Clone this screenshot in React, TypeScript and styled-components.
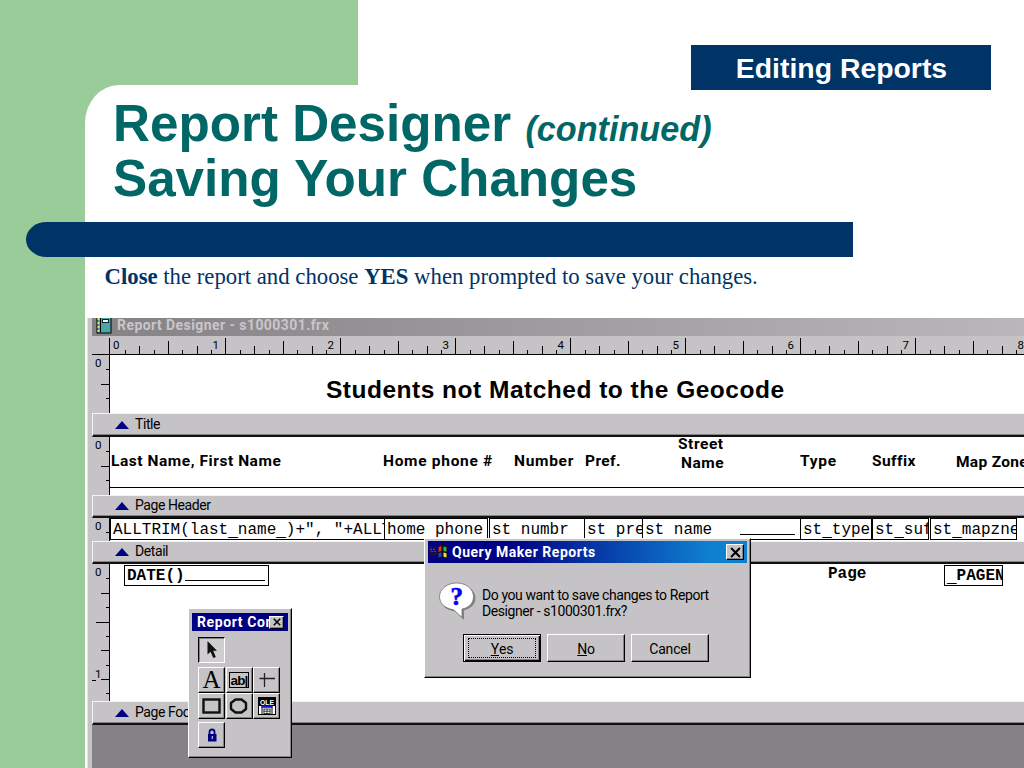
import type { ReactNode } from "react";
import styled, { createGlobalStyle, css } from "styled-components";

const colors = {
  green: "#99cc99",
  teal: "#006666",
  navy: "#003366",
  face: "#c6c3c6",
  shadow: "#848284",
  titleBlue: "#000084",
};

const sans = `"Liberation Sans", Arial, sans-serif`;
const ui = `Roboto, "Liberation Sans", sans-serif`;
const serif = `"Liberation Serif", "Times New Roman", serif`;
const mono = `"Liberation Mono", "Courier New", monospace`;

const GlobalStyle = createGlobalStyle`
  * {
    box-sizing: border-box;
  }
  body {
    margin: 0;
    overflow: hidden;
    background: white;
  }
`;

const raised = css`
  border: 1px solid;
  border-color: white #000 #000 white;
  box-shadow: inset -1px -1px 0 ${colors.shadow};
`;

/* ---------- slide ---------- */

const Slide = styled.main`
  width: 1024px;
  height: 768px;
  display: flex;
  flex-direction: column;
  background: ${colors.green};
  overflow: hidden;
  font-family: ${sans};
`;

const SlideTop = styled.header`
  position: relative;
  z-index: 1;
  flex: none;
  height: 85px;
  margin-left: 358px;
  padding: 45px 33px 0 0;
  display: flex;
  justify-content: flex-end;
  background: white;
`;

const Badge = styled.div`
  flex: none;
  width: 300px;
  height: 45px;
  padding-left: 1px;
  background: ${colors.navy};
  color: white;
  font-size: 28.4px;
  font-weight: bold;
  line-height: 47px;
  text-align: center;
`;

const SlideBody = styled.section`
  flex: 1;
  min-height: 0;
  margin-left: 85px;
  display: flex;
  flex-direction: column;
  background: white;
  border-top-left-radius: 34px 38px;
`;

const Heading = styled.h1`
  flex: none;
  height: 137px;
  margin: 0;
  padding: 11px 0 0 28px;
  color: ${colors.teal};
  font-size: 51.2px;
  line-height: 55px;
  white-space: nowrap;

  & em {
    font-size: 34.2px;
    line-height: 1;
  }
`;

const Bar = styled.div`
  flex: none;
  width: 827px;
  height: 35px;
  margin: 0 0 1px -59px;
  background: ${colors.navy};
  border-radius: 21px 0 0 21px / 18px 0 0 18px;
`;

const Instruction = styled.p`
  flex: none;
  height: 60px;
  margin: 0;
  padding: 6px 0 0 19.5px;
  color: ${colors.navy};
  font-family: ${serif};
  font-size: 22.76px;
  line-height: 26px;
  white-space: nowrap;
`;

/* ---------- designer window ---------- */

const Designer = styled.div`
  position: relative;
  flex: 1;
  min-height: 0;
  margin-left: 2px;
  padding-left: 4px;
  border-left: 1px solid #e4e2e4;
  display: flex;
  flex-direction: column;
  overflow: hidden;
  background: ${colors.face};
  font-family: ${ui};
`;

const DesignerTitle = styled.div`
  flex: none;
  height: 18px;
  padding-left: 4px;
  display: flex;
  gap: 5px;
  background: linear-gradient(90deg, #848284, #bab7ba);
  color: #c9c6c9;
  font-size: 14px;
  font-weight: bold;
  line-height: 15px;
  letter-spacing: 0.43px;
`;

const TopRuler = styled.svg`
  flex: none;
  display: block;
  width: 932px;
  height: 19px;
`;

const Section = styled.div<{ $height: number }>`
  flex: none;
  height: ${(p) => p.$height}px;
  display: flex;
`;

const SideRuler = styled.svg`
  flex: none;
  display: block;
  width: 18px;
  height: 100%;
`;

const Canvas = styled.div`
  position: relative;
  flex: 1;
  overflow: hidden;
  background: white;
`;

const BandBar = styled.div<{ $height: number }>`
  flex: none;
  height: ${(p) => p.$height}px;
  padding: 0 0 2px 22px;
  display: flex;
  align-items: center;
  gap: 6px;
  background: ${colors.face};
  border-top: 1px solid #f4f3f4;
  border-left: 1px solid #f4f3f4;
  border-bottom: 2px solid #111;
  box-shadow: inset 0 -1px 0 ${colors.shadow};
  font-size: 14px;
  line-height: 18px;
  letter-spacing: -0.42px;
`;

const Triangle = styled.span`
  margin-top: 2px;
  border: solid transparent;
  border-width: 0 7px 8px;
  border-bottom-color: ${colors.titleBlue};
`;

const Desk = styled.div`
  flex: 1;
  background: ${colors.shadow};
`;

/* report objects sit wherever the designer dropped them */
const ReportLabel = styled.span<{
  $x: number;
  $y: number;
  $size?: number;
  $track?: number;
  $font?: string;
}>`
  position: absolute;
  left: ${(p) => p.$x}px;
  top: ${(p) => p.$y}px;
  font-family: ${(p) => p.$font ?? ui};
  font-size: ${(p) => p.$size ?? 15.5}px;
  font-weight: bold;
  line-height: 18px;
  letter-spacing: ${(p) => p.$track ?? 0.55}px;
  white-space: nowrap;
`;

const Field = styled.span<{ $x: number; $width: number; $bold?: boolean }>`
  position: absolute;
  left: ${(p) => p.$x}px;
  top: ${(p) => (p.$bold ? 1 : 0)}px;
  width: ${(p) => p.$width}px;
  height: ${(p) => (p.$bold ? 21 : 22)}px;
  padding-left: 2px;
  border: 1px solid #000;
  overflow: hidden;
  font-family: ${mono};
  font-size: 16px;
  font-weight: ${(p) => (p.$bold ? "bold" : "normal")};
  line-height: ${(p) => (p.$bold ? 20 : 22)}px;
  white-space: pre;
`;

const Underscore = styled.span`
  position: relative;
  top: 2px;
  font-weight: bold;
`;

const FieldLine = styled.span<{ $x: number; $y: number; $width: number }>`
  position: absolute;
  left: ${(p) => p.$x}px;
  top: ${(p) => p.$y}px;
  width: ${(p) => p.$width}px;
  height: 1px;
  background: #000;
`;

/* ---------- dialog ---------- */

const Dialog = styled.div`
  position: absolute;
  left: 336px;
  top: 220px;
  width: 327px;
  height: 140px;
  padding: 2px 3px;
  background: ${colors.face};
  ${raised}
`;

const DialogTitle = styled.div`
  height: 22px;
  padding: 0 3px 0 0;
  display: flex;
  align-items: center;
  background: linear-gradient(90deg, #000084 25%, #0f7fd0 88%);
  color: white;
  font-size: 14px;
  font-weight: bold;
  letter-spacing: 0.52px;

  & > span {
    flex: 1;
    margin-left: 3px;
  }
`;

const CloseButton = styled.button<{ $size: number }>`
  flex: none;
  width: ${(p) => p.$size + 2}px;
  height: ${(p) => p.$size}px;
  padding: 0;
  display: flex;
  align-items: center;
  justify-content: center;
  background: ${colors.face};
  ${raised}
`;

const Message = styled.div`
  height: 71px;
  padding: 18px 0 0 10px;
  display: flex;
  gap: 4px;
  font-size: 14px;
  line-height: 15.5px;
  letter-spacing: -0.42px;
  white-space: nowrap;

  & > p {
    margin: 7px 0 0;
  }
`;

const Actions = styled.div`
  padding-left: 35px;
  display: flex;
  gap: 6px;
`;

const Button = styled.button<{ $focused?: boolean }>`
  width: 78px;
  height: 28px;
  padding: 2px;
  background: ${colors.face};
  color: #000;
  font-family: ${ui};
  font-size: 14px;
  letter-spacing: -0.2px;
  ${raised}
  ${(p) =>
    p.$focused &&
    css`
      border-color: #000;
      box-shadow:
        inset 1px 1px 0 white,
        inset -1px -1px 0 #000,
        inset -2px -2px 0 ${colors.shadow};
    `}

  & > span {
    height: 20px;
    margin: 1px 2px;
    padding-top: 2px;
    display: flex;
    align-items: center;
    justify-content: center;
    border: 1px dotted ${(p) => (p.$focused ? "#000" : "transparent")};
  }
`;

/* ---------- controls palette ---------- */

const Palette = styled.div`
  position: absolute;
  left: 100px;
  top: 290px;
  width: 104px;
  height: 150px;
  padding: 4px 3px;
  background: ${colors.face};
  ${raised}
`;

const PaletteTitle = styled.div`
  height: 18px;
  padding: 0 4px 0 5px;
  display: flex;
  align-items: center;
  background: ${colors.titleBlue};
  color: white;
  font-size: 14px;
  font-weight: bold;
  letter-spacing: 0.6px;
  white-space: nowrap;

  & > span {
    flex: 1;
    min-width: 0;
    overflow: hidden;
  }
`;

const Tools = styled.div`
  padding: 6px 0 0 6px;
  display: grid;
  grid-template-columns: repeat(3, 27.5px);
  grid-template-rows: 26px 26px 26px 26px;

  & > :nth-child(1) {
    grid-column: 1 / -1;
  }
  & > :nth-child(n + 2) {
    transform: translateY(4px);
  }
  & > :nth-child(8) {
    transform: translateY(7px);
  }
`;

const Tool = styled.button<{ $pressed?: boolean }>`
  width: 27px;
  height: 26px;
  padding: 0;
  display: flex;
  align-items: center;
  justify-content: center;
  background: ${colors.face};
  color: #000;
  ${raised}
  ${(p) =>
    p.$pressed &&
    css`
      border-color: #000 white white #000;
      background: #cfcdcf;
      box-shadow: inset 1px 1px 0 ${colors.shadow};
    `}
`;

const ToolLetter = styled.span`
  font-family: ${serif};
  font-size: 25px;
  line-height: 24px;
`;

const TextBoxGlyph = styled.span`
  width: 20px;
  height: 16px;
  border: 1px solid #000;
  font-family: ${sans};
  font-size: 13.5px;
  font-weight: bold;
  line-height: 15px;
  letter-spacing: -0.8px;
`;

function NotebookIcon() {
  return (
    <svg width="16" height="18" viewBox="0 0 16 18">
      <rect x="1" y="-1" width="14" height="16" fill="#4aa6a8" stroke="#000" />
      <path d="M2.5 0V14" stroke="#e8e070" strokeWidth="2" strokeDasharray="2 2" />
      <path d="M4.5 0V14.5" stroke="#000" />
      <rect x="6.5" y="1.5" width="6" height="3" fill="#dff" stroke="#123" />
    </svg>
  );
}

function CrossIcon({ size = 10 }: { size?: number }) {
  return (
    <svg width={size} height={size} viewBox="0 0 10 10">
      <path d="M1 1L9 9M9 1L1 9" stroke="#000" strokeWidth="1.9" />
    </svg>
  );
}

function FlagIcon() {
  return (
    <svg width="21" height="18" viewBox="0 0 21 18">
      <path d="M9 3Q14 0 19.500 3.500V16Q14 13 9 16Z" fill="#140a1c" />
      <path d="M1 5H9M1 8H9M2 11H9" stroke="#2a1034" strokeWidth="2.500" strokeDasharray="3 1" />
      <path d="M2 6.500H8M3 8.500H9" stroke="#b02050" strokeWidth="1.200" strokeDasharray="2 1" />
      <path d="M10.500 4l3-1v5l-3 1z" fill="#d83038" />
      <path d="M15.500 3.500l3 .8v4.500l-3-.8z" fill="#38b838" />
      <path d="M10.500 10.300l3-1v4.200l-3 1z" fill="#2444c8" />
      <path d="M15.500 9.500l3 .8v4.200l-3-.8z" fill="#e8e040" />
    </svg>
  );
}

function QuestionIcon() {
  return (
    <svg width="40" height="40" viewBox="0 0 40 40">
      <path
        d="M20 4C30 4 37.500 9.500 37.500 17S31.500 28 26 29.500V39L17.500 30.500C9 29.500 3 25 3 17S10 4 20 4Z"
        fill={colors.shadow}
      />
      <path
        d="M18.500 2C28 2 35.500 8 35.500 15.500S30 27 24 28V36.500L15.500 28.700C7 27.500 1.500 22.500 1.500 15.500S9 2 18.500 2Z"
        fill="white"
        stroke="#666"
        strokeWidth="0.7"
      />
      <text
        x="18.500"
        y="24"
        textAnchor="middle"
        fontFamily={serif}
        fontSize="25"
        fontWeight="bold"
        fill="#0000f0"
        stroke="#0000f0"
        strokeWidth="0.6"
      >
        ?
      </text>
    </svg>
  );
}

function PointerIcon() {
  return (
    <svg width="12" height="18" viewBox="0 0 12 18">
      <path d="M1.500 0V13.500L4.500 10.800L7.300 17L9.800 16L7.200 9.800H11Z" fill="#111" />
    </svg>
  );
}

function LineIcon() {
  return (
    <svg width="18" height="18" viewBox="0 0 18 18">
      <path d="M1.500 7.500H17M6.500 2V16" stroke="#222" strokeWidth="1.300" />
    </svg>
  );
}

function RectangleIcon() {
  return (
    <svg width="20" height="16" viewBox="0 0 20 16">
      <rect x="1.500" y="1.500" width="16" height="13" fill="none" stroke="#111" strokeWidth="2.400" />
    </svg>
  );
}

function RoundedIcon() {
  return (
    <svg width="20" height="16" viewBox="0 0 20 16">
      <path
        d="M6.500 1.500H12.500L17 5V11L12.500 14.500H6.500L2 11V5Z"
        fill="none"
        stroke="#111"
        strokeWidth="2.400"
        strokeLinejoin="round"
      />
    </svg>
  );
}

function OleIcon() {
  return (
    <svg width="18" height="19" viewBox="0 0 18 19">
      <rect width="18" height="18" fill="#000" />
      <text
        x="9"
        y="7.500"
        textAnchor="middle"
        fontFamily={sans}
        fontSize="8"
        fontWeight="bold"
        fill="white"
        textLength="14"
        lengthAdjust="spacingAndGlyphs"
      >
        OLE
      </text>
      <path d="M1 9H3.500V17H1ZM14.500 9H17V17H14.500Z" fill="white" />
      <rect x="4.500" y="9" width="9" height="8" fill="white" />
      <rect x="3.500" y="8.300" width="11" height="2.500" fill="#1010e0" />
      <path d="M5.500 12H12.500M5.500 14.200H12.500M5.500 16.500H12.500M6 12V16.500M9 12V16.500M12 12V16.500" stroke="#111" strokeWidth=".8" />
    </svg>
  );
}

function LockIcon() {
  return (
    <svg width="12" height="15" viewBox="0 0 12 15">
      <path d="M3.500 7V4Q3.500 1.500 6 1.500T8.500 4V7" fill="none" stroke={colors.titleBlue} strokeWidth="1.800" />
      <rect x="2" y="6" width="8.500" height="7.500" fill={colors.titleBlue} />
      <rect x="5.700" y="8" width="1.200" height="3" fill="#c6c3f6" />
    </svg>
  );
}

/* eighth-of-an-inch spacing on both rulers */
const STEP = 14.375;

function HorizontalRuler() {
  const ticks = Array.from({ length: 64 }, (_, i) => i + 1);
  return (
    <TopRuler>
      {ticks.map((i) => {
        const top = i % 8 === 0 ? 2 : i % 4 === 0 ? 5 : i % 2 === 0 ? 10 : 14;
        return <rect key={i} x={Math.round(18.4 + i * STEP)} y={top} width="1" height={19 - top} />;
      })}
      <rect x="17" y="2" width="1" height="17" />
      <rect y="18" width="932" height="1" />
      {[0, 1, 2, 3, 4, 5, 6, 7, 8].map((n) => (
        <text key={n} x={n === 0 ? 21 : 5.5 + n * 115} y="13" fontFamily={ui} fontSize="11.500">
          {n}
        </text>
      ))}
    </TopRuler>
  );
}

function VerticalRuler({ ticks }: { ticks: number }) {
  return (
    <SideRuler>
      {Array.from({ length: ticks }, (_, k) => k + 1).map((i) => {
        const left = i % 8 === 0 ? 9 : i % 4 === 0 ? 4 : i % 2 === 0 ? 9 : 14;
        return <rect key={i} x={left} y={Math.round(i * STEP)} width={18 - left} height="1" />;
      })}
      <rect x="17" width="1" height="100%" />
      <text x="3" y="12" fontFamily={ui} fontSize="11.500">
        0
      </text>
      {ticks >= 8 && (
        <>
          <text x="3" y="114" fontFamily={ui} fontSize="11.500">
            1
          </text>
          <rect x="0" y="116" width="4" height="1" />
        </>
      )}
    </SideRuler>
  );
}

type BandProps = {
  name: string;
  height: number;
  barHeight: number;
  ticks: number;
  children?: ReactNode;
};

function Band({ name, height, barHeight, ticks, children }: BandProps) {
  return (
    <>
      <Section $height={height}>
        <VerticalRuler ticks={ticks} />
        <Canvas>{children}</Canvas>
      </Section>
      <BandBar $height={barHeight}>
        <Triangle />
        {name}
      </BandBar>
    </>
  );
}

/* field expressions draw their underscores on the bottom edge of the box */
function Expression({ text }: { text: string }) {
  return text
    .split(/(_)/)
    .map((part, i) => (part === "_" ? <Underscore key={i}>_</Underscore> : part));
}

const headings = [
  { text: "Last Name, First Name", x: 1, y: 15 },
  { text: "Home phone #", x: 273, y: 15, track: 0.7 },
  { text: "Number", x: 404, y: 15, track: 0.7 },
  { text: "Pref.", x: 475, y: 15, track: 0.4 },
  { text: "Street", x: 568, y: -2 },
  { text: "Name", x: 571, y: 17 },
  { text: "Type", x: 690, y: 15, track: 0.7 },
  { text: "Suffix", x: 762, y: 15, track: 0.4 },
  { text: "Map Zone", x: 846, y: 16, track: 0.3 },
];

const fields = [
  { text: `ALLTRIM(last_name_)+", "+ALLT`, x: 0, width: 275 },
  { text: "home phone", x: 274, width: 104 },
  { text: "st numbr", x: 379, width: 96 },
  { text: "st pre", x: 474, width: 59 },
  { text: "st name", x: 532, width: 159 },
  { text: "st_type", x: 690, width: 72 },
  { text: "st_suf", x: 762, width: 57 },
  { text: "st_mapzne", x: 820, width: 87 },
];

function SaveDialog() {
  return (
    <Dialog>
      <DialogTitle>
        <FlagIcon />
        <span>Query Maker Reports</span>
        <CloseButton $size={16}>
          <CrossIcon size={11} />
        </CloseButton>
      </DialogTitle>
      <Message>
        <QuestionIcon />
        <p>
          Do you want to save changes to Report
          <br />
          Designer - s1000301.frx?
        </p>
      </Message>
      <Actions>
        <Button $focused>
          <span>
            <u>Y</u>es
          </span>
        </Button>
        <Button>
          <span>
            <u>N</u>o
          </span>
        </Button>
        <Button>
          <span>Cancel</span>
        </Button>
      </Actions>
    </Dialog>
  );
}

function ControlsPalette() {
  return (
    <Palette>
      <PaletteTitle>
        <span>Report Con</span>
        <CloseButton $size={13}>
          <CrossIcon size={8} />
        </CloseButton>
      </PaletteTitle>
      <Tools>
        <Tool $pressed>
          <PointerIcon />
        </Tool>
        <Tool>
          <ToolLetter>A</ToolLetter>
        </Tool>
        <Tool>
          <TextBoxGlyph>ab|</TextBoxGlyph>
        </Tool>
        <Tool>
          <LineIcon />
        </Tool>
        <Tool>
          <RectangleIcon />
        </Tool>
        <Tool>
          <RoundedIcon />
        </Tool>
        <Tool>
          <OleIcon />
        </Tool>
        <Tool>
          <LockIcon />
        </Tool>
      </Tools>
    </Palette>
  );
}

export default function App() {
  return (
    <>
      <GlobalStyle />
      <Slide>
        <SlideTop>
          <Badge>Editing Reports</Badge>
        </SlideTop>
        <SlideBody>
          <Heading>
            Report Designer <em>(continued)</em>
            <br />
            Saving Your Changes
          </Heading>
          <Bar />
          <Instruction>
            <b>Close</b> the report and choose <b>YES</b> when prompted to save your changes.
          </Instruction>
          <Designer>
            <DesignerTitle>
              <NotebookIcon />
              Report Designer - s1000301.frx
            </DesignerTitle>
            <HorizontalRuler />
            <Band name="Title" height={58} barHeight={24} ticks={3}>
              <ReportLabel $x={216} $y={26} $size={24.5} $track={0.5} $font={sans}>
                Students not Matched to the Geocode
              </ReportLabel>
            </Band>
            <Band name="Page Header" height={58} barHeight={23} ticks={3}>
              {headings.map((h) => (
                <ReportLabel key={h.text} $x={h.x} $y={h.y} $track={h.track}>
                  {h.text}
                </ReportLabel>
              ))}
              <FieldLine $x={0} $y={50} $width={914} />
            </Band>
            <Band name="Detail" height={23} barHeight={23} ticks={1}>
              {fields.map((f) => (
                <Field key={f.text} $x={f.x} $width={f.width}>
                  <Expression text={f.text} />
                </Field>
              ))}
              <FieldLine $x={630} $y={16} $width={55} />
            </Band>
            <Band name="Page Footer" height={137} barHeight={24} ticks={9}>
              <Field $bold $x={14} $width={145}>
                DATE()
              </Field>
              <FieldLine $x={75} $y={16} $width={80} />
              <ReportLabel $x={718} $y={1} $size={16} $track={0} $font={mono}>
                Page
              </ReportLabel>
              <Field $bold $x={834} $width={59}>
                <Expression text="_PAGEN" />
              </Field>
            </Band>
            <Desk />
            <ControlsPalette />
            <SaveDialog />
          </Designer>
        </SlideBody>
      </Slide>
    </>
  );
}
